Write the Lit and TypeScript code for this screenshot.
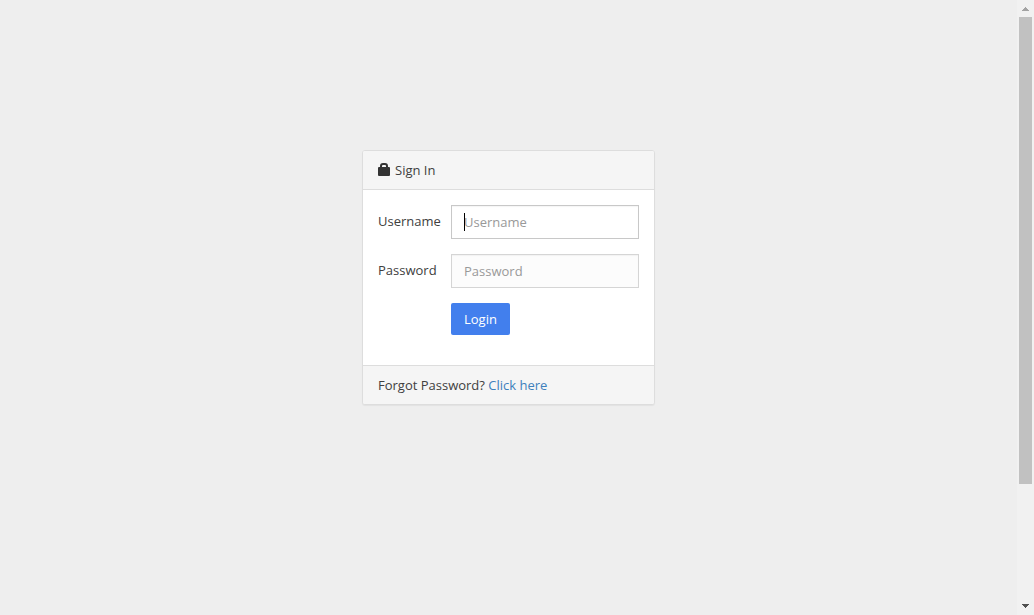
import { LitElement, html, css } from "lit";
import { customElement } from "lit/decorators.js";

@customElement("scroll-rail")
export class ScrollRail extends LitElement {
  static styles = css`
    :host {
      display: flex;
      flex-direction: column;
      background: #f1f1f1;
    }
    .arrow {
      flex: none;
      display: block;
      width: 17px;
      height: 17px;
    }
    .track {
      flex: 1;
      padding: 0 2px;
    }
    .thumb {
      height: 80.4%;
      background: #c1c1c1;
    }
  `;

  render() {
    return html`
      <svg class="arrow" viewBox="0 0 17 17" shape-rendering="crispEdges" aria-hidden="true">
        <path fill="#a3a3a3" d="M8 7h1v1h1v1h1v1h1v1H5v-1h1V9h1V8h1z" />
      </svg>
      <div class="track"><div class="thumb"></div></div>
      <svg class="arrow" viewBox="0 0 17 17" shape-rendering="crispEdges" aria-hidden="true">
        <path fill="#505050" d="M5 6h7v1h-1v1h-1v1H9v1H8V9H7V8H6V7H5z" />
      </svg>
    `;
  }
}

@customElement("app-root")
export class AppRoot extends LitElement {
  static styles = css`
    :host {
      display: grid;
      grid-template-columns: 1fr 17px;
      min-height: 100vh;
      background: #eeeeee;
      color: #404040;
      font: 13px/18px "Open Sans", "Noto Sans", sans-serif;
    }
    * {
      box-sizing: border-box;
    }
    .page {
      display: flex;
      justify-content: center;
      align-items: flex-start;
      padding: 150px 16px 40px;
    }
    .card {
      width: 100%;
      max-width: 293px;
      background: #ffffff;
      border: 1px solid #dddddd;
      border-radius: 3px;
      box-shadow: 0 1px 1px rgba(0, 0, 0, 0.05);
      overflow: hidden;
    }
    .bar {
      padding: 10px 15px;
      background: #f5f5f5;
    }
    .head {
      display: flex;
      align-items: center;
      gap: 5px;
      margin: 0;
      font: inherit;
      border-bottom: 1px solid #dddddd;
    }
    .foot {
      border-top: 1px solid #dddddd;
    }
    .lock {
      display: block;
      width: 12px;
      height: 14px;
    }
    .form {
      display: grid;
      grid-template-columns: 63px 1fr;
      gap: 15px 10px;
      padding: 15px 15px 30px;
    }
    .label {
      padding-top: 7px;
    }
    .field {
      position: relative;
    }
    .input {
      display: block;
      width: 100%;
      height: 34px;
      margin: 0;
      padding: 6px 12px;
      border: 1px solid #d5d5d5;
      border-radius: 0;
      background: #fcfcfc;
      color: #555555;
      font: inherit;
      outline: none;
      box-shadow: inset 0 1px 1px rgba(0, 0, 0, 0.04);
    }
    .input.active {
      background: #ffffff;
      border-color: #c8c8c8;
    }
    .input::placeholder {
      color: #999999;
      opacity: 1;
    }
    .caret {
      position: absolute;
      left: 13px;
      top: 8px;
      width: 1px;
      height: 18px;
      background: #000000;
      pointer-events: none;
    }
    .login {
      grid-column: 2;
      justify-self: start;
      height: 32px;
      margin: 0;
      padding: 0 13px;
      border: 0;
      border-radius: 2px;
      background: #427fed;
      color: #ffffff;
      font: inherit;
      cursor: pointer;
    }
    .link {
      color: #3d80bc;
      text-decoration: none;
    }
  `;

  render() {
    return html`
      <main class="page">
        <section class="card">
          <h1 class="bar head">
            <svg class="lock" viewBox="0 0 12 14" aria-hidden="true">
              <path
                fill="#333333"
                fill-rule="evenodd"
                d="M2 4V3Q2 0 5 0h2q3 0 3 3v1h1q1 0 1 1v7q0 1-1 1H1q-1 0-1-1V5q0-1 1-1zM4 4h4V3q0-1-1-1H5Q4 2 4 3z"
              />
            </svg>
            Sign In
          </h1>
          <form class="form" @submit=${(e: Event) => e.preventDefault()}>
            <label class="label" for="username">Username</label>
            <div class="field">
              <input class="input active" id="username" type="text" placeholder="Username" />
              <span class="caret"></span>
            </div>
            <label class="label" for="password">Password</label>
            <div class="field">
              <input class="input" id="password" type="password" placeholder="Password" />
            </div>
            <button class="login" type="submit">Login</button>
          </form>
          <div class="bar foot">Forgot Password? <a class="link" href="#">Click here</a></div>
        </section>
      </main>
      <scroll-rail></scroll-rail>
    `;
  }
}
